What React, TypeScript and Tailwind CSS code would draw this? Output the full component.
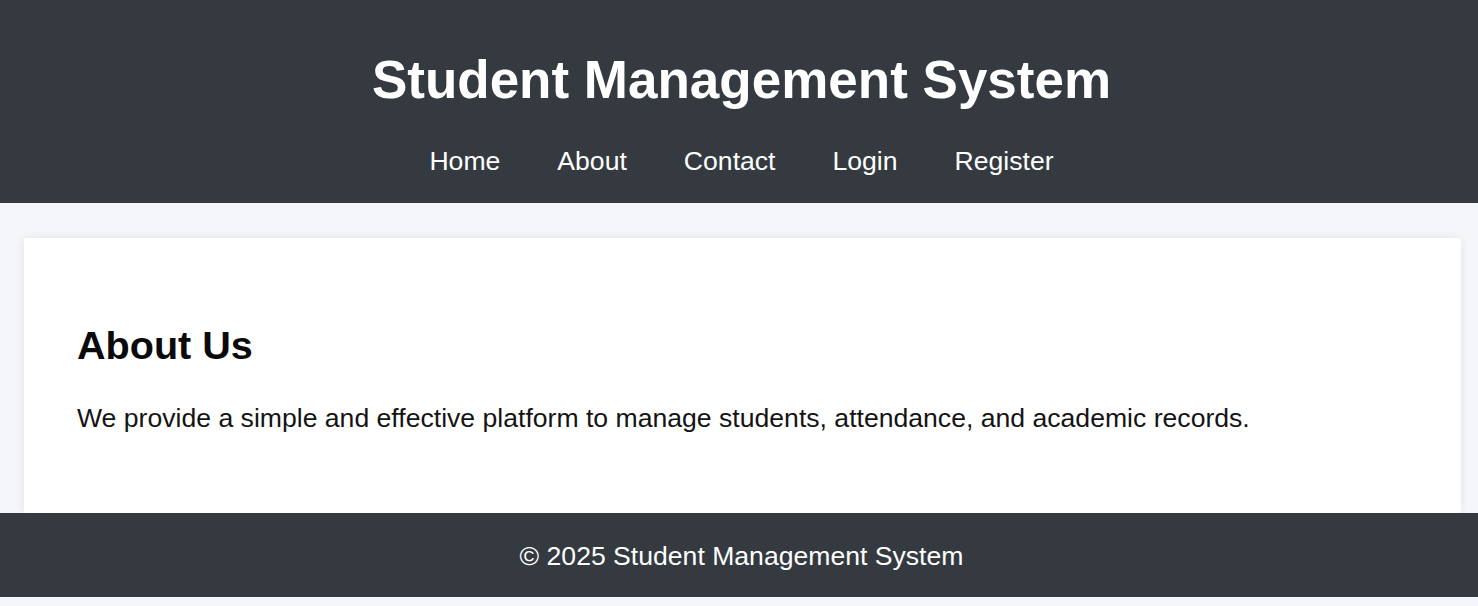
import React from "react";

const links = ["Home", "About", "Contact", "Login", "Register"];

const App = () => {
  return (
    <div className="min-h-screen bg-[#f5f6f9] font-['Liberation_Sans',Arial,sans-serif]">
      <header className="bg-[#343a40] pt-[49px] pb-[27px] pl-[5px] text-white">
        <h1 className="text-center text-[53px] font-bold leading-[61px]">Student Management System</h1>
        <nav className="mt-[36px] flex justify-center gap-[57px] text-[26.6px] leading-[30px]">
          {links.map((l) => (
            <a key={l} href="#" className="text-white">
              {l}
            </a>
          ))}
        </nav>
      </header>

      <main className="ml-[24px] mr-[17px] mt-[35px] rounded-[2px] bg-white pl-[53px] pr-[53px] pt-[84px] pb-[80px] shadow-[0_0_10px_rgba(0,0,0,0.08)]">
        <h2 className="text-[39.6px] font-bold leading-[46px] text-[#0a0a0a]">About Us</h2>
        <p className="mt-[35px] text-[26.6px] leading-[30px] text-[#141414]">
          We provide a simple and effective platform to manage students, attendance, and academic records.
        </p>
      </main>

      <footer className="bg-[#343a40] pt-[28px] pb-[26px] pl-[5px] text-center text-[26.6px] leading-[30px] text-white">
        © 2025 Student Management System
      </footer>
    </div>
  );
};

export default App;
